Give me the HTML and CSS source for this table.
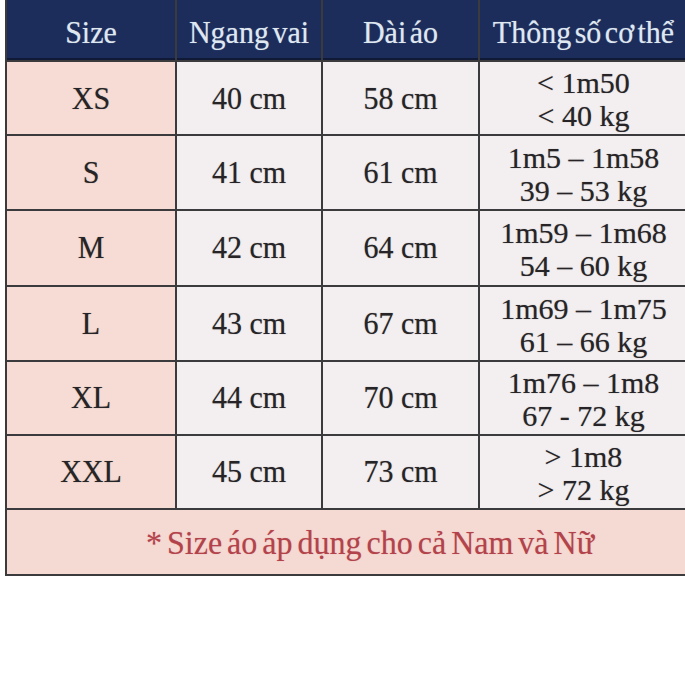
FILE: index.html
```html
<!DOCTYPE html>
<html lang="vi">
<head>
<meta charset="utf-8">
<link rel="stylesheet" href="styles.css">
</head>
<body>
<div class="chart">
  <div class="th"><span>Size</span></div>
  <div class="th"><span>Ngang vai</span></div>
  <div class="th"><span>Dài áo</span></div>
  <div class="th"><span>Thông số cơ thể</span></div>

  <div class="td size"><span>XS</span></div>
  <div class="td"><span>40 cm</span></div>
  <div class="td"><span>58 cm</span></div>
  <div class="td body"><p>&lt; 1m50<br>&lt; 40 kg</p></div>

  <div class="td size"><span>S</span></div>
  <div class="td"><span>41 cm</span></div>
  <div class="td"><span>61 cm</span></div>
  <div class="td body"><p>1m5 – 1m58<br>39 – 53 kg</p></div>

  <div class="td size"><span>M</span></div>
  <div class="td"><span>42 cm</span></div>
  <div class="td"><span>64 cm</span></div>
  <div class="td body"><p>1m59 – 1m68<br>54 – 60 kg</p></div>

  <div class="td size"><span>L</span></div>
  <div class="td"><span>43 cm</span></div>
  <div class="td"><span>67 cm</span></div>
  <div class="td body"><p>1m69 – 1m75<br>61 – 66 kg</p></div>

  <div class="td size"><span>XL</span></div>
  <div class="td"><span>44 cm</span></div>
  <div class="td"><span>70 cm</span></div>
  <div class="td body"><p>1m76 – 1m8<br>67 - 72 kg</p></div>

  <div class="td size"><span>XXL</span></div>
  <div class="td"><span>45 cm</span></div>
  <div class="td"><span>73 cm</span></div>
  <div class="td body"><p>&gt; 1m8<br>&gt; 72 kg</p></div>

  <div class="foot"><span>* Size áo áp dụng cho cả Nam và Nữ</span></div>
</div>
</body>
</html>
```

FILE: styles.css
```css
html, body {
  margin: 0;
  padding: 0;
  background: #ffffff;
}

body {
  font-family: "Liberation Serif", "Times New Roman", serif;
  width: 685px;
  height: 685px;
  overflow: hidden;
}

.chart {
  margin-left: 5px;
  width: 680px;
  display: grid;
  grid-template-columns: 168px 144px 155px 1fr;
  grid-template-rows: 60px 72px 73px 74px 73px 72px 72px 64px;
  column-gap: 2px;
  row-gap: 2px;
  padding: 0 0 2px 2px;
  background: #3b3a3c;
  box-sizing: content-box;
}

.th {
  background: #1c2d5b;
  color: #dfe7f1;
  font-size: 30px;
  word-spacing: -4px;
  display: flex;
  align-items: center;
  justify-content: center;
  padding-top: 3px;
  box-shadow: inset 0 -2px 0 #101a36;
  text-shadow: 0 0 1px rgba(223, 231, 241, 0.5);
}

.th span,
.td span,
.foot span {
  display: inline-block;
  transform: scaleY(1.05);
}

.td {
  background: #f3eef0;
  color: #262426;
  font-size: 30px;
  display: flex;
  align-items: center;
  justify-content: center;
  text-align: center;
  text-shadow: 0 0 1px rgba(38, 36, 38, 0.45);
}

.td.size {
  background: #f6dcd4;
}

.td.body p {
  margin: 0;
  font-size: 30px;
  line-height: 33px;
  padding-top: 2px;
}

.foot {
  grid-column: 1 / -1;
  background: #f5d9d3;
  color: #b3434b;
  font-size: 32px;
  word-spacing: -3px;
  display: flex;
  align-items: center;
  justify-content: center;
  padding-left: 46px;
  text-shadow: 0 0 1px rgba(179, 67, 75, 0.4);
}
```
